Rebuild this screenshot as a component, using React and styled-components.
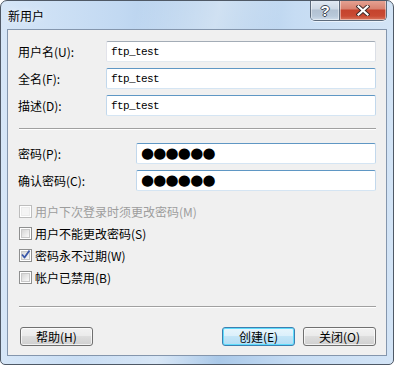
import React from 'react'
import styled, {createGlobalStyle} from 'styled-components'

const GlobalStyle = createGlobalStyle`
    html, body {
        margin: 0;
        padding: 0;
        background: #fff;
    }
    body {
        font-family: "Noto Sans CJK SC", "Liberation Sans", sans-serif;
        font-size: 12px;
        color: #000;
    }
`

const Window = styled.div`
    width: 394px;
    height: 365px;
    box-sizing: border-box;
    border: 1px solid #4f5966;
    border-radius: 7px 7px 5px 5px;
    background:
        linear-gradient(100deg, rgba(255,255,255,0) 30%, rgba(255,255,255,.45) 48%, rgba(255,255,255,0) 62%),
        linear-gradient(90deg, #d6e6f7 0%, #c2d9f2 30%, #a9c8e8 55%, #c6dcf3 75%, #d3e4f6 100%);
    display: flex;
    flex-flow: column;
    overflow: hidden;
`

const TitleBar = styled.div`
    height: 28px;
    display: flex;
    flex-flow: row;
    align-items: flex-start;
    padding: 0 6px 0 7px;
    flex-shrink: 0;

    >.title {
        margin-top: 7px;
        line-height: 16px;
        font-size: 12px;
        text-shadow: 0 0 6px rgba(255,255,255,.9);
        flex-grow: 1;
    }
`

const CaptionButtons = styled.div`
    display: flex;
    flex-flow: row;
    margin-top: -1px;
    height: 20px;
    border: 1px solid #5d6b7c;
    border-top: none;
    border-radius: 0 0 5px 5px;
    overflow: hidden;
    box-shadow: 0 1px 0 rgba(255,255,255,.6);
`

const CaptionButton = styled.div`
    width: ${p => p.width}px;
    height: 20px;
    box-sizing: border-box;
    display: flex;
    align-items: center;
    justify-content: center;
    background: ${p => p.close
        ? 'linear-gradient(180deg, #e6a596 0%, #d8816f 45%, #c5432d 50%, #c94a33 80%, #d9775f 100%)'
        : 'linear-gradient(180deg, #e3ebf4 0%, #cdd9e6 45%, #b2c1d2 50%, #b8c8d9 80%, #cfdcea 100%)'};
    border-left: ${p => p.close ? '1px solid #5d6b7c' : 'none'};
    box-shadow: inset 0 0 0 1px rgba(255,255,255,.45);

    >.help {
        font-family: "Liberation Sans", sans-serif;
        font-weight: bold;
        font-size: 15px;
        line-height: 15px;
        color: #fff;
        text-shadow: 1px 0 0 #3b4654, -1px 0 0 #3b4654, 0 1px 0 #3b4654, 0 -1px 0 #3b4654;
    }
`

const Client = styled.div`
    flex-grow: 1;
    margin: 0 6px 8px 6px;
    border: 1px solid #8496ad;
    background: #f0f0f0;
    padding: 11px 10px 9px 10px;
    display: flex;
    flex-flow: column;
`

const Fields = styled.div`
    display: flex;
    flex-flow: column;
    gap: 6px;
`

const FieldRow = styled.div`
    display: grid;
    grid-template-columns: ${p => p.labelWidth}px 1fr;
    align-items: center;
    height: 21px;
`

const Label = styled.span`
    font-size: 12px;
    line-height: 14px;
    white-space: nowrap;
`

const TextBox = styled.div`
    height: 21px;
    box-sizing: border-box;
    background: #fff;
    border: 1px solid;
    border-color: ${p => p.accent
        ? '#5f97c4 #c2d8ec #d5e5f3 #c2d8ec'
        : '#a3acb6 #dbdfe6 #e3e9ef #e2e3ea'};
    border-radius: 2px;
    padding: 0 4px;
    display: flex;
    align-items: center;

    >.mono {
        font-family: "Liberation Mono", "DejaVu Sans Mono", monospace;
        font-size: 11px;
        letter-spacing: -0.6px;
        color: #000;
    }

    >.dots {
        font-family: "DejaVu Sans", sans-serif;
        font-size: 15px;
        line-height: 15px;
        letter-spacing: -0.8px;
        color: #000;
    }
`

const Separator = styled.div`
    height: 1px;
    background: #a0a0a0;
    box-shadow: 0 1px 0 #fff;
    margin: ${p => p.margin};
`

const Checks = styled.div`
    display: flex;
    flex-flow: column;
    gap: 9px;
    margin-top: 14px;
    padding-left: 1px;
`

const CheckRow = styled.label`
    display: flex;
    flex-flow: row;
    align-items: center;
    gap: 3px;
    height: 13px;
    color: ${p => p.disabled ? '#9d9d9d' : '#000'};

    >span {
        font-size: 12px;
        line-height: 14px;
    }
`

const Box = styled.span`
    width: 13px;
    height: 13px;
    box-sizing: border-box;
    border: 1px solid ${p => p.disabled ? '#bdbdbd' : '#8e8f8f'};
    background: #fff;
    padding: 1px;
    display: flex;
    flex-shrink: 0;

    >.inner {
        flex-grow: 1;
        position: relative;
        border: 1px solid ${p => p.disabled ? '#ececec' : '#c9c9c9'};
        background: ${p => p.disabled
            ? '#f4f4f4'
            : 'linear-gradient(135deg, #d6d6d6 0%, #ececec 60%, #fafafa 100%)'};
    }

    svg {
        position: absolute;
        left: -2px;
        top: -3px;
    }
`

const Buttons = styled.div`
    display: flex;
    flex-flow: row;
    align-items: center;
    gap: 8px;
    padding-left: 2px;

    >.spacer {
        flex-grow: 1;
    }
`

const Button = styled.div`
    width: 73px;
    height: 19px;
    box-sizing: border-box;
    border: 1px solid ${p => p.primary ? '#3c7fb1' : '#707070'};
    border-radius: 3px;
    display: flex;
    align-items: center;
    justify-content: center;
    font-size: 12px;
    line-height: 14px;
    background: ${p => p.primary
        ? 'linear-gradient(180deg, #e8f5fc 0%, #dcf0fb 45%, #c3e5f7 50%, #b3dcf3 100%)'
        : 'linear-gradient(180deg, #f2f2f2 0%, #ebebeb 45%, #dddddd 50%, #cfcfcf 100%)'};
    box-shadow: inset 0 0 0 1px ${p => p.primary ? '#5fdcfc' : 'rgba(255,255,255,.7)'};
`

const CheckItem = ({label, checked, disabled}) => (
    <CheckRow disabled={disabled}>
        <Box disabled={disabled}>
            <span className="inner">
                {checked && (
                    <svg width="11" height="11" viewBox="0 0 11 11">
                        <path d="M2 5.5 L4.5 8.5 L9.5 1.5" fill="none" stroke="#3a57a8" strokeWidth="1.8" strokeLinejoin="round"/>
                    </svg>
                )}
            </span>
        </Box>
        <span>{label}</span>
    </CheckRow>
)

const App = () => (
    <>
        <GlobalStyle/>
        <Window>
            <TitleBar>
                <span className="title">新用户</span>
                <CaptionButtons>
                    <CaptionButton width={28}>
                        <span className="help">?</span>
                    </CaptionButton>
                    <CaptionButton width={47} close>
                        <svg width="14" height="11" viewBox="0 0 14 11">
                            <path d="M2.5 1.5 L11.5 9.5 M11.5 1.5 L2.5 9.5" stroke="#3d2a2a" strokeWidth="4" strokeLinecap="square"/>
                            <path d="M2.5 1.5 L11.5 9.5 M11.5 1.5 L2.5 9.5" stroke="#fff" strokeWidth="2.2" strokeLinecap="square"/>
                        </svg>
                    </CaptionButton>
                </CaptionButtons>
            </TitleBar>
            <Client>
                <Fields>
                    <FieldRow labelWidth={88}>
                        <Label>用户名(U):</Label>
                        <TextBox><span className="mono">ftp_test</span></TextBox>
                    </FieldRow>
                    <FieldRow labelWidth={88}>
                        <Label>全名(F):</Label>
                        <TextBox accent><span className="mono">ftp_test</span></TextBox>
                    </FieldRow>
                    <FieldRow labelWidth={88}>
                        <Label>描述(D):</Label>
                        <TextBox accent><span className="mono">ftp_test</span></TextBox>
                    </FieldRow>
                </Fields>
                <Separator margin="12px 0 14px 1px"/>
                <Fields>
                    <FieldRow labelWidth={118}>
                        <Label>密码(P):</Label>
                        <TextBox accent><span className="dots">●●●●●●</span></TextBox>
                    </FieldRow>
                    <FieldRow labelWidth={118}>
                        <Label>确认密码(C):</Label>
                        <TextBox accent><span className="dots">●●●●●●</span></TextBox>
                    </FieldRow>
                </Fields>
                <Checks>
                    <CheckItem label="用户下次登录时须更改密码(M)" disabled/>
                    <CheckItem label="用户不能更改密码(S)"/>
                    <CheckItem label="密码永不过期(W)" checked/>
                    <CheckItem label="帐户已禁用(B)"/>
                </Checks>
                <Separator margin="22px 0 20px 1px"/>
                <Buttons>
                    <Button>帮助(H)</Button>
                    <span className="spacer"/>
                    <Button primary>创建(E)</Button>
                    <Button>关闭(O)</Button>
                </Buttons>
            </Client>
        </Window>
    </>
)

export default App
